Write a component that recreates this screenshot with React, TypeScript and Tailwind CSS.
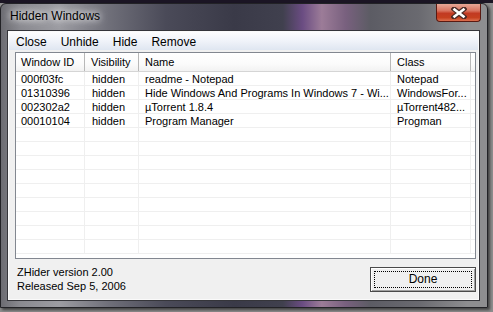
import React from "react";

const rows = [
  ["000f03fc", "hidden", "readme - Notepad", "Notepad"],
  ["01310396", "hidden", "Hide Windows And Programs In Windows 7 - Wi...", "WindowsFor..."],
  ["002302a2", "hidden", "µTorrent 1.8.4", "µTorrent482..."],
  ["00010104", "hidden", "Program Manager", "Progman"],
];

const emptyRows = Array.from({ length: 9 });

function Row({ cells }: { cells: string[] }) {
  return (
    <div className="flex h-[14px] border-b border-[#efefef] text-[11px] leading-[14px] text-black">
      <div className="w-[69px] pl-[5px] border-r border-[#efefef] whitespace-nowrap overflow-hidden">{cells[0]}</div>
      <div className="w-[54px] pl-[7px] border-r border-[#efefef] whitespace-nowrap overflow-hidden">{cells[1]}</div>
      <div className="w-[252px] pl-[6px] border-r border-[#efefef] whitespace-nowrap overflow-hidden">{cells[2]}</div>
      <div className="w-[80px] pl-[6px] border-r border-[#efefef] whitespace-nowrap overflow-hidden">{cells[3]}</div>
    </div>
  );
}

export default function App() {
  return (
    <div className="w-[493px] h-[312px] bg-[#8e8e8e] overflow-hidden font-['Liberation_Sans',Arial,sans-serif]">
      <div className="h-[3px] bg-[#1b1524]" />
      <div className="w-[488px] h-[305px] rounded-t-[6px] border border-[#222226] flex flex-col shadow-[2px_2px_3px_rgba(0,0,0,0.55)] bg-[linear-gradient(90deg,#6c6c72_0%,#8a8a90_4%,#9c9ca2_12%,#70707a_22%,#4a4a58_34%,#3a3a48_48%,#40404e_58%,#6a4c82_62%,#9c7c98_66%,#78607e_71%,#5c5c64_76%,#6a6a70_86%,#8e8e90_96%)]">
        {/* title bar */}
        <div className="h-[27px] flex items-start justify-between">
          <div className="pl-[9px] pt-[5px] text-[12px] leading-[15px] text-black [text-shadow:0_0_6px_rgba(255,255,255,0.95),0_0_10px_rgba(255,255,255,0.8)]">
            Hidden Windows
          </div>
          <div className="mr-[6px] w-[45px] h-[18px] rounded-b-[4px] border border-t-0 border-[#5a1a12] flex items-center justify-center bg-[linear-gradient(180deg,#e7a797_0%,#d8735f_40%,#c23a22_55%,#c5401f_80%,#dd7050_100%)]">
            <svg width="16" height="12" viewBox="0 0 16 12">
              <path d="M3 2 L13 10 M13 2 L3 10" stroke="#4a2a26" strokeWidth="5" strokeLinecap="square" />
              <path d="M3.5 2.5 L12.5 9.5 M12.5 2.5 L3.5 9.5" stroke="#ffffff" strokeWidth="2.6" strokeLinecap="square" />
            </svg>
          </div>
        </div>
        {/* client */}
        <div className="flex-1 ml-[7px] mr-[8px] mb-[7px] bg-[#f0f0f0] border border-[#fafafa] shadow-[0_0_0_1px_#35353a] flex flex-col">
          <div className="h-[18px] flex items-center pl-0 pt-[1px] text-[12px] text-black bg-[linear-gradient(180deg,#fdfdfe_0%,#f0f3f9_50%,#dfe6f1_100%)]">
            <span className="px-[7px]">Close</span>
            <span className="px-[7px]">Unhide</span>
            <span className="px-[7px]">Hide</span>
            <span className="px-[7px]">Remove</span>
          </div>
          <div className="mt-[2px] ml-[6px] mr-[2px] h-[207px] border border-[#828790] bg-white overflow-hidden">
            <div className="flex h-[19px] border-b border-[#d5d5d5] bg-[linear-gradient(180deg,#ffffff_0%,#fbfbfb_60%,#f2f2f2_100%)] text-[11px] text-black items-center">
              <div className="w-[69px] h-full flex items-center pl-[5px] border-r border-[#b8b8b8]">Window ID</div>
              <div className="w-[54px] h-full flex items-center pl-[6px] border-r border-[#b8b8b8]">Visibility</div>
              <div className="w-[252px] h-full flex items-center pl-[6px] border-r border-[#b8b8b8]">Name</div>
              <div className="w-[80px] h-full flex items-center pl-[6px] border-r border-[#b8b8b8]">Class</div>
            </div>
            {rows.map((r, i) => (
              <Row key={i} cells={r} />
            ))}
            {emptyRows.map((_, i) => (
              <Row key={"e" + i} cells={["", "", "", ""]} />
            ))}
          </div>
          <div className="flex-1 flex items-center justify-between pl-[8px] pr-[2px]">
            <div className="text-[11px] leading-[14px] text-black">
              <div>ZHider version 2.00</div>
              <div>Released Sep 5, 2006</div>
            </div>
            <div className="w-[106px] h-[25px] border border-[#4a4a4a] bg-[#f0f0f0] shadow-[inset_1px_1px_0_#ffffff,inset_-1px_-1px_0_#a0a0a0] p-[3px]">
              <div className="w-full h-full border border-dotted border-black flex items-center justify-center text-[12px] text-black">
                Done
              </div>
            </div>
          </div>
        </div>
      </div>
    </div>
  );
}
